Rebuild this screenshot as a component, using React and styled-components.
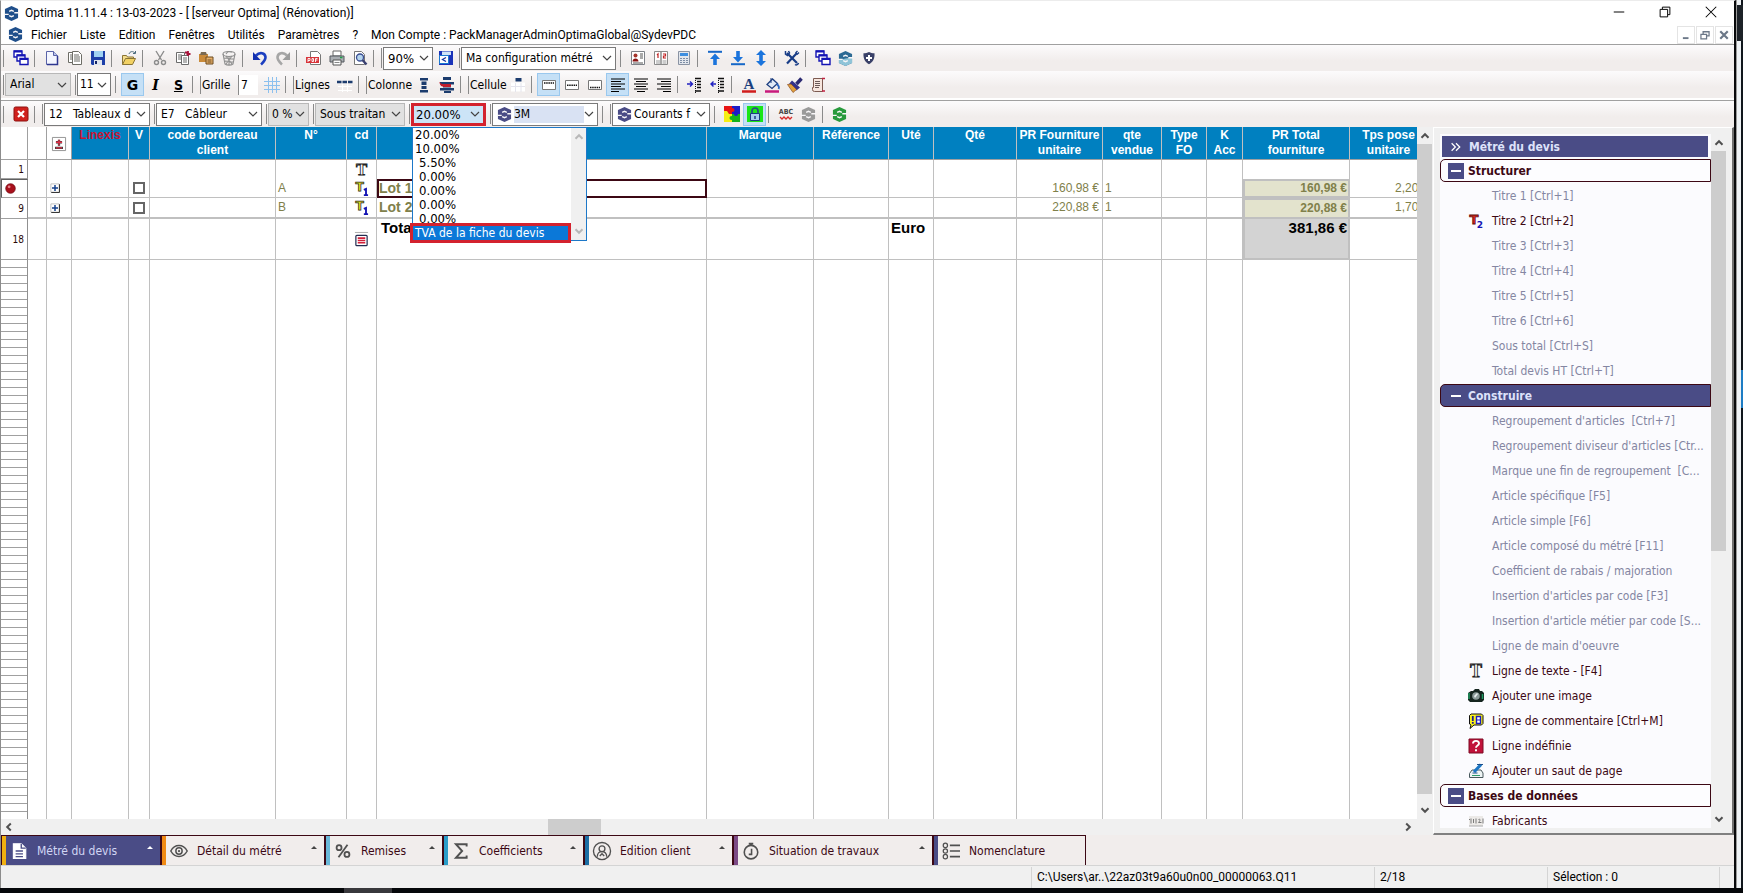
import React, { useState } from 'react';
import styled, { createGlobalStyle, css } from 'styled-components';

const ui = 'Roboto, "Noto Sans", sans-serif';
const tahoma = '"DejaVu Sans Condensed", "DejaVu Sans", sans-serif';
const arial = '"Liberation Sans", Arial, sans-serif';

const GlobalStyle = createGlobalStyle`
  * { box-sizing: border-box; }
  body {
    margin: 0;
    background: #05070a;
    font-family: ${ui};
    font-size: 12px;
    color: #000;
  }
  button, select, input { font: inherit; color: inherit; margin: 0; }
  button { padding: 0; border: 0; background: none; }
  svg { display: block; flex: none; overflow: visible; }
`

/* ---------- icons ---------- */

const Svg = ({ size = 16, children, ...rest }) => (
  <svg width={size} height={size} viewBox="0 0 16 16" fill="none" aria-hidden="true" {...rest}>{children}</svg>
)

const Logo = ({ color = '#1f4f8b', second, size = 15 }) => (
  <Svg size={size}>
    <path d="M8 0 15 3.200V12.800L8 16 1 12.800V3.200z" fill={color} />
    {second && <path d="M1 9.500 8 8l7-1v5.800L8 16 1 12.800z" fill={second} />}
    <path d="M5.500 5.700 8 4.600l2.500 1.100M5.500 10.300 8 11.400l2.500-1.100M11 7.200h5M0 8.900h5" stroke="#f8f6f8" strokeWidth="1.400" />
  </Svg>
)

const Chevron = ({ color = '#444' }) => (
  <svg width="10" height="6" viewBox="0 0 10 6" fill="none" aria-hidden="true"><path d="M1 1l4 4 4-4" stroke={color} strokeWidth="1.2" /></svg>
)

const Arrow = ({ turn = 0, color = '#505050' }) => (
  <svg width="10" height="10" viewBox="0 0 10 10" fill="none" aria-hidden="true">
    <path d="M1.5 6.8 5 3.2l3.5 3.6" stroke={color} strokeWidth="2" transform={`rotate(${turn} 5 5)`} />
  </svg>
)

const alignLines = (a, b, c) => (
  <path d={`M1 2h14M${a} 4.5h10M1 7h14M${b} 9.5h10M1 12h14M${c} 14.5h8`} stroke="#000" strokeWidth="1.2" />
)

const icons = {
  windows: <g stroke="#1414b4" strokeWidth="1.4" fill="#fff"><path d="M1 1h8v6H1z" /><path d="M4 5h8v6H4z" /><path d="M7 8.500h8v6H7z" /><path d="M1 1.500h8M4 5.500h8M7 9h8" strokeWidth="2" /></g>,
  file: <g stroke="#5a63a8"><path d="M2.500 1.500h7l4 4v9h-11z" fill="#f4f6ff" /><path d="M9.500 1.500v4h4" fill="#b9c3ea" /><path d="M13.500 6v8.500H3" stroke="#2e3790" strokeWidth="1.500" /></g>,
  files: <g stroke="#6d6d66" fill="#fff"><path d="M1.500 2.500h7v10h-7z" /><path d="M5.500 1.500h6l3 3v10h-9z" /><path d="M7 5h5M7 7h6M7 9h6M7 11h6M3 5h2M3 7h2M3 9h2" /></g>,
  save: <g><path d="M1 1h14v14H2l-1-1z" fill="#1d3fa8" /><path d="M4 1h9v6H4z" fill="#9fd2f2" /><path d="M4 10h8v5H4z" fill="#dfe5ee" /><path d="M5 11h2v3H5z" fill="#13246a" /></g>,
  open: <g stroke="#8a7434"><path d="M1.500 14.500v-9h4l1 1.500h6v2" fill="#f4dd8d" /><path d="M1.500 14.500 4.500 8.500h10l-3 6z" fill="#f2d163" /><path d="M8 4c1-3 4-3 6-1M14.500 1v2.500H12" stroke="#4a6a7c" /></g>,
  cut: <g stroke="#8c8c8c" strokeWidth="1.400"><path d="M4 1l5.500 9M12 1 6.500 10" /><circle cx="4.500" cy="12.500" r="2" /><circle cx="11.500" cy="12.500" r="2" /></g>,
  copy: <g stroke="#6b6b6b" fill="#fff"><path d="M1.500 2.500h8v10h-8z" /><path d="M6.500 5.500h7v9h-7z" /><path d="M3 5h4M3 7h3M3 9h3M8 8h4M8 10h4M8 12h4" /><path d="M10 2.500h3M13 1v5M11.500 4h4" stroke="#a8123a" strokeWidth="1.800" /></g>,
  paste: <g><path d="M1 4h9v8H1z" fill="#c98a3a" /><path d="M3 2h5l1 3H2z" fill="#7a6a52" /><path d="M8 7h7v7H8z" fill="#e7b06a" stroke="#6b4a20" /><path d="M9.500 10h4M9.500 12h4" stroke="#6b4a20" /></g>,
  trash: <g stroke="#8e8e8e" strokeWidth="1.100"><ellipse cx="8" cy="4" rx="6" ry="2.500" /><path d="M2 4l2 10c2 1.500 6 1.500 8 0l2-10M5 6l6 8M11 6l-6 8M8 6.500V15M3.500 8l9 1M4 11l8 1" /><path d="M5 4l2-2.500 4 .5" /></g>,
  undo: <g><path d="M4 5.500C8 1.500 13 3 13.500 7c.2 3-2 5-4.500 7.500" stroke="#1c3fc0" strokeWidth="2.600" /><path d="M1 2v8h7.500z" fill="#1430b0" /></g>,
  redo: <g><path d="M12 5.500C8 1.500 3 3 2.500 7c-.2 3 2 5 4.500 7.500" stroke="#a6a6a6" strokeWidth="2.600" /><path d="M15 2v8H7.500z" fill="#9c9c9c" /></g>,
  pdf: <g><path d="M4.500 1.500h7l3 3v10h-10z" fill="#fff" stroke="#777" /><path d="M0 7h13v6H0z" fill="#d8343a" /><path d="M2 12V8.500h2v2H2M6 8.500v3h1.500v-3zM9.500 12V8.500h2M9.500 10h2" stroke="#fff" strokeWidth=".9" /></g>,
  printer: <g><path d="M4 1h8v5H4z" fill="#fff" stroke="#666" /><path d="M1 6h14v6H1z" fill="#a9adb2" stroke="#55595e" /><path d="M4 10h8v5H4z" fill="#fff" stroke="#555" /><path d="M11 7.500h2.500" stroke="#1fa04a" strokeWidth="1.500" /><path d="M5.500 12.500h5" stroke="#888" /></g>,
  preview: <g><path d="M2.500 1.500h7l3 3v10h-10z" fill="#fff" stroke="#777" /><circle cx="8" cy="7.500" r="3.500" fill="#b6d5ee" stroke="#3a4e92" strokeWidth="1.300" /><path d="M10.500 10l4 4.500" stroke="#3a3f70" strokeWidth="2.400" /></g>,
  saveConf: <g><path d="M1 1h14v14H1z" fill="#1b33b8" /><path d="M4 1.500h9V5H4z" fill="#cfe4f7" /><path d="M1.500 5.500h9v8h-9z" fill="#fff" stroke="#1b7ad0" /><path d="M8 7.500 4.500 9.500l3.500 2" stroke="#1233a0" strokeWidth="1.300" /></g>,
  contact: <g><path d="M1.500 1.500h13v13h-13z" fill="#fff" stroke="#7e8288" /><circle cx="5.500" cy="5.500" r="2" fill="#a5352c" /><path d="M2.500 11.500c0-4 6-4 6 0z" fill="#8a1414" /><path d="M10 4h3M10 6h3M10 8h3M3 13h10" stroke="#555" /></g>,
  pages: <g><path d="M1.500 1.500h6.500v13H1.500zM8 1.500h6.500v13H8z" fill="#fff" stroke="#8b8b8b" /><path d="M4 5l1-1v4M10 4h2.500v2H10.500v2h2.500" stroke="#c22424" strokeWidth="1.200" /><path d="M3 11h4M3 13h4M9.500 11h4M9.500 13h4" stroke="#999" /></g>,
  calc: <g><path d="M2.500 1.500h11v13h-11z" fill="#e2e6ec" stroke="#8a93a3" /><path d="M4 3h8v3H4z" fill="#3d8ee0" /><path d="M4 8.500h8M4 10.500h8M4 12.500h8" stroke="#7e8da5" strokeDasharray="2 1" /></g>,
  toTop: <g><path d="M1 1.800h14" stroke="#1667c8" strokeWidth="2" /><path d="M8 3.500 13 9H9.800v6H6.200V9H3z" fill="#1b74dc" /></g>,
  toBottom: <g><path d="M1 14.200h14" stroke="#1667c8" strokeWidth="2" /><path d="M8 12.500 13 7H9.800V1H6.200v6H3z" fill="#1b74dc" /></g>,
  upDown: <path d="M8 0l5 5H9.800v6H13l-5 5-5-5h3.200V5H3z" fill="#1b74dc" />,
  tools: <g stroke="#183c86"><path d="M3 3l10 10" strokeWidth="2.200" /><path d="M13 3 3 13.500" strokeWidth="2.200" /><path d="M1.500 1v3l2 1.500L5.500 3 4.500 1M11 14.500c1.500 1 3 0 3.500-1.500" strokeWidth="1.500" /><path d="M11.500 3l2-2M13 4.500l2-2" strokeWidth="1.300" /></g>,
  shield: <g><path d="M8 2C9.500 3 11.500 3.300 13.500 3.300 14 9 11.500 12.500 8 14.300 4.500 12.500 2 9 2.500 3.300 4.500 3.300 6.500 3 8 2z" fill="#3a4168" /><path d="M8 5v6M5 8h6" stroke="#fff" strokeWidth="2" /></g>,
  grid: <path d="M0 4.500h16M0 8.500h16M0 12.500h16M4.500 0v16M8.500 0v16M12.500 0v16" stroke="#8cc0ee" />,
  lines: <g><path d="M0 5h16" stroke="#1c3c6e" strokeWidth="2.500" strokeDasharray="4.500 1" /><path d="M1 9.500h14M1 13.500h14M5.500 7v8M10.500 7v8" stroke="#fff" /></g>,
  cols: <g fill="#1c3c6e"><path d="M4 1h8v2.500H4zM5.500 4.500h5V8h-5zM5.500 9h5v3h-5zM4 13h8v2.500H4z" /></g>,
  colsDel: <g><path d="M4 0h8v3H4zM1 5h14v2.500H1zM4 8.500h8v2H4zM1 11h14v2.500H1zM5 14h7v2H5z" fill="#1c3c6e" /><path d="M0 5l3 2h9v3H5L2 9z" fill="#c01c2c" /></g>,
  cell: <g><path d="M1 5.500h14v9H1z" fill="#fff" /><path d="M5.500 1h6v3.500h-6z" fill="#1c3c6e" /><path d="M1 9.500h14M5.500 6v9M11 6v9" stroke="#e4e4ec" /></g>,
  vTop: <g><path d="M1.500 3.500h13v9h-13z" fill="#fff" stroke="#777" /><path d="M3 6h10" stroke="#111" strokeWidth="1.500" strokeDasharray="1.500 .7" /></g>,
  vMid: <g><path d="M1.500 3.500h13v9h-13z" fill="#fff" stroke="#777" /><path d="M3 8.200h10" stroke="#111" strokeWidth="1.500" strokeDasharray="1.500 .7" /></g>,
  vBot: <g><path d="M1.500 3.500h13v9h-13z" fill="#fff" stroke="#777" /><path d="M3 10.500h10" stroke="#111" strokeWidth="1.500" strokeDasharray="1.500 .7" /></g>,
  left: alignLines(1, 1, 1),
  center: alignLines(3, 3, 4),
  right: alignLines(5, 5, 7),
  indent: <g><path d="M8 1.500h6M10 4.500h4M10 7.500h4M10 10.500h4M8 14h6" stroke="#111" strokeWidth="1.500" /><path d="M8.500 1v15" stroke="#111" strokeDasharray="1 1" /><path d="M0 7h5M3 4.500 5.500 7 3 9.500" stroke="#2020c0" strokeWidth="1.400" /></g>,
  outdent: <g><path d="M8 1.500h6M10 4.500h4M10 7.500h4M10 10.500h4M8 14h6" stroke="#111" strokeWidth="1.500" /><path d="M8.500 1v15" stroke="#111" strokeDasharray="1 1" /><path d="M1 7h5M3.500 4.500 1 7l2.500 2.500" stroke="#2020c0" strokeWidth="1.400" /></g>,
  fontColor: <g><text x="8" y="12" textAnchor="middle" fontFamily="Liberation Serif" fontWeight="700" fontSize="15" fill="#1b3f7e">A</text><path d="M1 14.500h14" stroke="#d01c1c" strokeWidth="2.500" /></g>,
  fill: <g><path d="M3 7.500 8.500 2l5 4.500-5.500 5z" fill="#dfe9f6" stroke="#1e3f80" strokeWidth="1.300" /><path d="M7 1v5" stroke="#1e3f80" /><path d="M13 7c2 2 2.500 3.500 1.500 5" stroke="#2a66c0" strokeWidth="1.800" /><path d="M1 14.500h14" stroke="#c81a7c" strokeWidth="2.500" /></g>,
  brush: <g><path d="M14.500 1.500 9.500 7" stroke="#2c2a72" strokeWidth="3.500" /><path d="M5 3.500 13 10.500 9.500 13.500 2 7z" fill="#34318a" /><path d="M.5 7.500 4 7l5.500 5.500L6 15.500z" fill="#e3a23c" stroke="#8a4a20" strokeWidth=".7" /></g>,
  script: <g><path d="M3.500 1.500h9v13h-8a2 2 0 0 1-2-2v-2h1z" fill="#f7e6de" stroke="#7c5a50" /><path d="M5 4.500h5M5 6.500h5M5 8.500h5M5 10.500h4" stroke="#6a5a58" /><path d="M12 1.500h3M12 14h3" stroke="#c02040" strokeWidth="1.500" /></g>,
  close: <g><rect x="1" y="1" width="14" height="14" rx="1.500" fill="#d0201c" stroke="#8c100e" /><path d="M5 5l6 6M11 5l-6 6" stroke="#fff" strokeWidth="2.200" /></g>,
  puzzle: <g><path d="M0 0h8v8H0z" fill="#e81414" /><path d="M8 0h8v8H8z" fill="#1c1cc8" /><path d="M0 8h8v8H0z" fill="#f6ee12" /><path d="M8 8h8v8H8z" fill="#16b41c" /><path d="M0 5h3l2 3h3v3H0z" fill="#f6ee12" /><circle cx="8.500" cy="4" r="2" fill="#e81414" /><circle cx="12" cy="8" r="2" fill="#1c1cc8" /><circle cx="7.500" cy="12" r="2" fill="#16b41c" /></g>,
  lock: <g><path d="M0 0h16v16H0z" fill="#19e619" /><path d="M5 8V5a3 3 0 0 1 6 0v3" stroke="#2b4a86" strokeWidth="1.700" /><path d="M3.500 7.500h9v7h-9z" fill="#a9cdee" stroke="#1d3d80" /><path d="M8 10v3" stroke="#1d3d80" strokeWidth="1.500" /></g>,
  spell: <g><text x="8" y="8" textAnchor="middle" fontFamily="DejaVu Sans Condensed" fontWeight="700" fontSize="7" fill="#444">ABC</text><path d="M2 11l2 2 2-2 2 2 2-2 2 2 2-2" stroke="#d82a2a" strokeWidth="1.300" /></g>,
  lineText: <text x="8" y="14" textAnchor="middle" fontFamily="Liberation Serif" fontWeight="700" fontSize="18" fill="#fff" stroke="#222" strokeWidth=".9">T</text>,
  title1: <g><text x="6" y="11" textAnchor="middle" fontFamily="DejaVu Sans" fontWeight="700" fontSize="13" fill="#f3ec1c" stroke="#222" strokeWidth=".8">T</text><path d="M10.500 9.500 12.800 8.500v6M10.500 15h4.500" stroke="#1414b4" strokeWidth="2" /></g>,
  title2: <g><text x="6" y="11" textAnchor="middle" fontFamily="DejaVu Sans" fontWeight="700" fontSize="13" fill="#e02a1c" stroke="#5a0c08" strokeWidth=".8">T</text><text x="12" y="15" textAnchor="middle" fontFamily="DejaVu Sans" fontWeight="700" fontSize="9" fill="#1414b4">2</text></g>,
  total: <g><rect x="2" y="3.500" width="12" height="11" rx="1" fill="#fff" stroke="#222c50" strokeWidth="1.300" /><path d="M4 6.500h8M4 9h8M4 11.500h8" stroke="#d2203a" strokeWidth="1.700" /><path d="M1 .5h14" stroke="#aaa" /></g>,
  camera: <g><path d="M0 5l3-2h2l2-2h4l1 2h2l2 2v7l-2 2H2l-2-2z" fill="#15251f" /><circle cx="8" cy="8" r="3.800" fill="#8a9a98" /><path d="M6 8l3-3 1 1-3 4z" fill="#e6eeee" /><path d="M1 5v6M14.500 6v5" stroke="#1f9a62" strokeWidth="1.500" /></g>,
  comment: <g><path d="M1.500 2.500 3 1h10.500L15 2.500v8L13.500 12H6l-4 3.500L3 12l-1.500-1z" fill="#f8f01c" stroke="#111" /><path d="M4.800 3v5M4.800 9v1.800" stroke="#1a1a90" strokeWidth="1.800" /><path d="M8.500 3.500 12.500 3.500v7h-4z" fill="#fff" stroke="#1a1ac0" strokeWidth="1.400" /><path d="M8.500 7h4" stroke="#1a1ac0" /></g>,
  unknown: <g><path d="M1 1h14v14H1z" fill="#c1123a" stroke="#7c0a24" /><path d="M5 5.500c0-3.500 6-3.500 6 0 0 2-3 2-3 4.200M8 11.200v2" stroke="#fff" strokeWidth="1.900" /></g>,
  pageBreak: <g><path d="M1.500 10.500 4 7h9l2 3v4.500H1.500z" fill="#eef4f4" stroke="#48585c" /><path d="M13 1.500 6 9" stroke="#1b76c4" strokeWidth="3.200" /><path d="M9 1.500h6M4.500 10h5" stroke="#1d4f8c" /><path d="M4 12.500h8" stroke="#2f9c6c" /></g>,
  makers: <g><path d="M1 3h14v10H1z" fill="#eceae8" /><path d="M3 5.500v5M5.500 6v4M8 5.500v5M10.500 6.500c2-1 2 1 0 3h3M1 7l1-1M15 5.500v5" stroke="#7a7a7a" /><path d="M1 13h14" stroke="#aaa" /></g>,
  plus: <g><path d="M2.500 2.500h11v11h-11z" fill="#fff" stroke="#b0b0b0" /><path d="M14 3v11H3" stroke="#333" strokeWidth="1.300" /><path d="M8 4v8M4 8h8" stroke="#16418c" strokeWidth="2" /></g>,
  plusMinus: <g><path d="M.5.500h15v15H.5z" fill="#fff" stroke="#888" /><path d="M8 3v7M4.500 6h7M3.500 12.500h9" stroke="#333" strokeWidth="2.600" /><path d="M8 3v6.500M4.500 6h7M4.500 12.500h7" stroke="#e03048" strokeWidth="1.500" /></g>,
  ball: <g><circle cx="8" cy="8" r="7" fill="#a8101c" stroke="#6c0810" /><circle cx="6" cy="5.500" r="2" fill="#e8828a" /></g>,
}

const Icon = ({ name, size }) => <Svg size={size}>{icons[name]}</Svg>

/* ---------- window frame ---------- */

const Desktop = styled.div`
  display: flex;
  flex-direction: column;
  height: 100vh;
  min-height: 600px;
  overflow: hidden;
`
const DesktopRow = styled.div`
  display: flex;
  flex: 1;
  min-height: 0;
`
const Window = styled.div`
  display: flex;
  flex-direction: column;
  flex: 1;
  min-width: 0;
  background: #f0f0f0;
  border-left: 1px solid #8c8c8c;
  border-right: 2px solid #08090b;
  border-top: 1px solid #ececec;
`
const Behind = styled.div`
  display: flex;
  flex-direction: column;
  flex: none;
  width: 7px;
  background: #eef2f5;
  border-left: 1px solid #9a9a9a;
  border-right: 2px solid #10161c;
`
const BehindBar = styled.div`
  height: 36px;
  margin: 5px -2px 0 0;
  background: #1d2228;
`
const BehindMark = styled.div`
  width: 2px;
  height: 38px;
  margin: 329px -2px 0 auto;
  background: #1d7cc4;
`
const Taskbar = styled.div`
  flex: none;
  height: 5px;
  padding-left: 344px;
  background: #05070a;
  &::before {
    content: '';
    display: block;
    width: 48px;
    height: 5px;
    background: #38383c;
  }
`
const TitleBar = styled.header`
  display: flex;
  align-items: center;
  gap: 6px;
  height: 24px;
  padding-left: 3px;
  background: #fff;
`
const Title = styled.h1`
  flex: 1;
  margin: 0;
  font-size: 12px;
  font-weight: 400;
`
const WindowButtons = styled.div`
  display: flex;
  align-self: flex-start;
`
const WindowButton = styled.button`
  display: flex;
  align-items: center;
  justify-content: center;
  width: 46px;
  height: 21px;
`
const MenuBar = styled.nav`
  display: flex;
  align-items: center;
  gap: 13px;
  height: 20px;
  padding-left: 7px;
  background: #fff;
  border-bottom: 1px solid #a0a0a0;
  > svg { margin-right: -5px; }
`
const MdiButtons = styled.div`
  display: flex;
  gap: 1px;
  margin-left: auto;
  padding-right: 1px;
`
const MdiButton = styled.button`
  display: flex;
  align-items: center;
  justify-content: center;
  width: 18px;
  height: 18px;
  border: 1px solid #e4e4e4;
`

/* ---------- tool bars ---------- */

const ToolBar = styled.div`
  display: flex;
  align-items: center;
  flex: none;
  height: ${({ tall }) => tall ? 27 : 26}px;
  background: linear-gradient(#fcfbfc, #f1edec 60%);
  font-family: ${tahoma};
  ${({ ruled }) => ruled && css`
    height: 27px;
    border-top: 1px solid #a0a0a0;
    box-shadow: 0 -2px 0 #fff;
    margin-top: 2px;
  `}
`
const Sep = styled.span`
  flex: none;
  width: 8px;
  height: 17px;
  padding-left: 2px;
  &::before {
    content: '';
    display: block;
    width: 1px;
    height: 100%;
    background: #8a8a8a;
  }
`
const Grip = styled(Sep)`
  width: 4px;
  height: 20px;
`
const ToolButton = styled.button`
  display: flex;
  align-items: center;
  justify-content: center;
  flex: none;
  width: 23px;
  height: 23px;
  ${({ active }) => active && css`
    background: #c5e0f6;
    border: 1px solid #9ac8ee;
  `}
`
const Letter = styled.span`
  font: ${({ face }) => face};
  text-decoration: ${({ underline }) => underline ? 'underline' : 'none'};
`
const SelectBox = styled.span`
  display: flex;
  align-items: center;
  gap: 2px;
  flex: none;
  position: relative;
  width: ${({ w }) => w}px;
  height: 23px;
  margin-right: ${({ gap = 2 }) => gap}px;
  padding-left: ${({ pad = 4 }) => pad}px;
  border: 1px solid ${({ grey }) => grey ? '#b8b8b8' : '#7a7a7a'};
  background: ${({ grey }) => grey ? '#e1e1e1' : '#fff'};
  ${({ marked }) => marked && css`
    padding-left: 2px;
    border: 3px solid #d3222e;
    background: #cce4f7;
  `}
  > svg:last-of-type { position: absolute; right: 3px; pointer-events: none; }
`
const NativeSelect = styled.select`
  appearance: none;
  flex: 1;
  min-width: 0;
  height: 17px;
  margin-right: 13px;
  padding: 0;
  border: 0;
  outline: 0;
  font-size: ${({ $large }) => $large ? 13 : 12}px;
  line-height: 17px;
  background: ${({ $tint }) => $tint ? '#d9e2f3' : 'transparent'};
`
const FieldLabel = styled.label`
  width: ${({ w }) => w}px;
  flex: none;
  margin-left: 2px;
  padding-left: 1px;
  border-left: 1px solid #8a8a8a;
  font-size: 12px;
  line-height: 18px;
  white-space: nowrap;
`
const SmallInput = styled.input`
  width: 20px;
  height: 20px;
  margin-right: 2px;
  padding: 0 2px;
  border: 0;
  border-left: 1px solid #8a8a8a;
  background: #fff;
`
const DropList = styled.ul`
  position: absolute;
  z-index: 5;
  top: 21px;
  left: -2px;
  display: flex;
  width: 175px;
  margin: 0;
  padding: 0;
  border: 1px solid #1d78c8;
  background: #fff;
  font-size: 13px;
  list-style: none;
`
const Options = styled.div`
  flex: 1;
`
const Option = styled.li`
  height: 14px;
  padding-left: ${({ inset }) => inset ? 6 : 2}px;
  line-height: 14px;
  white-space: nowrap;
  ${({ selected }) => selected && css`
    position: relative;
    margin-right: 3px;
    color: #fff;
    background: #0b78d8;
    outline: 3px solid #d3222e;
    font-size: 12px;
  `}
`

/* ---------- scroll bars ---------- */

const Scroll = styled.div`
  display: flex;
  flex: none;
  flex-direction: ${({ row }) => row ? 'row' : 'column'};
  align-items: center;
  justify-content: space-between;
  ${({ row }) => row ? 'height: 16px; padding: 0 20px 0 3px;' : 'width: 15px; padding: 4px 0;'}
  background: #f0f0f0;
`
const Track = styled.div`
  display: flex;
  flex: 1;
  align-self: stretch;
  flex-direction: ${({ row }) => row ? 'row' : 'column'};
  margin: ${({ row }) => row ? '0 4px' : '3px 0'};
`
const Thumb = styled.div`
  flex: ${({ size }) => size};
  background: #cdcdcd;
`
const Space = styled.div`
  flex: ${({ size }) => size};
`

/* ---------- grid ---------- */

const Workspace = styled.main`
  display: flex;
  flex: 1;
  min-height: 0;
`
const GridSide = styled.section`
  display: flex;
  flex-direction: column;
  flex: 1;
  min-width: 0;
`
const GridRow = styled.div`
  display: flex;
  flex: 1;
  min-height: 0;
  padding-right: 1px;
`
const GridClip = styled.div`
  flex: 1;
  min-width: 0;
  overflow: hidden;
  background: #fff;
`
const Grid = styled.table`
  width: 1427px;
  height: 100%;
  table-layout: fixed;
  border-collapse: separate;
  border-spacing: 0;
  font: 12px ${arial};
`
const Th = styled.th`
  height: 33px;
  padding: 1px 0 0;
  border-right: 1px solid #c0c0c0;
  border-bottom: 1px solid #a0a0a0;
  background: ${({ plain }) => plain ? '#fff' : '#0080c0'};
  color: ${({ red }) => red ? '#c81432' : '#fff'};
  line-height: 15px;
  white-space: pre-line;
  vertical-align: ${({ plain }) => plain ? 'middle' : 'top'};
  > svg { margin: 0 auto; }
  ${({ plain }) => plain && 'border-color: #a0a0a0;'}
`
const Tr = styled.tr`
  height: ${({ h }) => h}px;
  color: ${({ dark }) => dark ? '#000' : '#80804a'};
`
const Td = styled.td`
  padding: ${({ top }) => top ? 1 : 0}px 3px 0 ${({ pad = 2 }) => pad}px;
  overflow: hidden;
  border-right: 1px solid #c0c0c0;
  border-bottom: ${({ line }) => line}px solid #c0c0c0;
  line-height: 15px;
  white-space: nowrap;
  text-align: ${({ align = 'left' }) => align};
  font-weight: ${({ bold }) => bold ? 700 : 400};
  font-size: ${({ big, top }) => top ? 15 : big ? 14 : 12}px;
  vertical-align: ${({ top }) => top ? 'top' : 'middle'};
  > svg, > input { margin: 0 auto; }
  ${({ focus }) => focus && css`
    border: 2px solid #3c0814;
    padding-left: 0;
  `}
  ${({ shade, top }) => shade && css`
    background: ${shade};
    border: 2px solid #c0c0c0;
    padding-right: 1px;
    ${top && 'border-top: 0;'}
  `}
`
const Expand = styled.button`
  display: block;
`
const Check = styled.input`
  display: block;
  appearance: none;
  width: 12px;
  height: 12px;
  border: 2px solid #666;
  background: #fff;
`
const RowHead = styled.th`
  padding: 0 3px 0 0;
  border-right: 1px solid #909090;
  border-bottom: 1px solid #a0a0a0;
  color: #2a0808;
  font: 10px ${tahoma};
  text-align: right;
  ${({ current }) => current && css`
    padding-left: 3px;
    border-top: 1px solid #606060;
    border-left: 1px solid #606060;
  `}
`
const Stripes = styled.td`
  padding: 0;
  border-right: 1px solid #909090;
  background: repeating-linear-gradient(#fff 0 7px, #a0a0a0 7px 8px);
`

/* ---------- side panel ---------- */

const Panel = styled.aside`
  display: flex;
  flex: none;
  width: 301px;
  padding: 6px 6px 5px;
  border: 1px solid #fff;
  border-right: 2px solid #707070;
  border-bottom: 2px solid #808080;
`
const PanelList = styled.div`
  flex: 1;
  min-width: 0;
  overflow: hidden;
  background: #fbfbfe;
  font-family: ${tahoma};
`
const PanelTitle = styled.h2`
  display: flex;
  align-items: center;
  gap: 8px;
  height: 21px;
  margin: 2px 3px 2px 2px;
  padding-left: 9px;
  background: #4a4c86;
  color: #dde2fa;
  font-size: 12px;
`
const Group = styled.button`
  display: flex;
  align-items: center;
  gap: 4px;
  width: 100%;
  height: 23px;
  margin: 1px 0;
  padding-left: 7px;
  border: 1px solid #3c0814;
  border-radius: 5px 0 0 5px;
  background: ${({ open }) => open ? '#4a4c86' : '#fdfdff'};
  color: ${({ open }) => open ? '#dde2fa' : '#3c0814'};
  font-weight: 700;
`
const Minus = styled.span`
  display: flex;
  align-items: center;
  justify-content: center;
  width: 16px;
  height: 16px;
  background: #4a4c86;
  &::before {
    content: '';
    width: 10px;
    height: 2px;
    background: #fff;
  }
`
const Action = styled.button`
  display: flex;
  align-items: center;
  gap: 8px;
  width: 100%;
  height: 25px;
  padding-left: 28px;
  color: ${({ enabled }) => enabled ? '#3c0814' : '#8486a2'};
  white-space: pre;
  &::before {
    content: '';
    display: ${({ enabled }) => enabled ? 'none' : 'block'};
    width: 16px;
  }
`

/* ---------- bottom ---------- */

const Tabs = styled.div`
  display: flex;
  flex: none;
  height: 31px;
  border-bottom: 1px solid #d4d4d4;
  background: #f1edec;
  font-family: ${tahoma};
`
const Tab = styled.button`
  display: flex;
  align-items: center;
  width: ${({ w }) => w}px;
  padding-left: 5px;
  border-top: 1px solid #3c0814;
  border-left: 2px solid #3c0814;
  box-shadow: inset 4px 0 0 ${({ stripe }) => stripe};
  background: ${({ active }) => active ? '#4a4c86' : 'transparent'};
  color: ${({ active }) => active ? '#d2d6f4' : '#3c0814'};
  &:first-child { border-left-width: 1px; }
  &:last-child { border-right: 1px solid #3c0814; }
`
const TabIcon = styled.span`
  display: flex;
  justify-content: center;
  width: 20px;
  margin: 0 8px 0 2px;
  color: ${({ active }) => active ? '#fff' : '#505050'};
`
const TabCaret = styled.span`
  margin: 0 7px 7px auto;
  border: 3px solid transparent;
  border-top: 0;
  border-bottom-color: ${({ active }) => active ? '#fff' : '#444'};
`
const StatusBar = styled.footer`
  display: flex;
  flex: none;
  height: 22px;
  padding: 1px 14px 0 0;
  line-height: 20px;
`
const StatusCell = styled.span`
  flex: none;
  width: ${({ w }) => w}px;
  padding-left: 5px;
  border-left: 1px solid #d4d4d4;
  &:first-of-type { margin-left: auto; }
  &:last-of-type { border-right: 1px solid #d4d4d4; }
`

const menus = ['Fichier', 'Liste', 'Edition', 'Fenêtres', 'Utilités', 'Paramètres', '?', 'Mon Compte : PackManagerAdminOptimaGlobal@SydevPDC']

const rates = ['20.00%', '10.00%', '5.50%', '0.00%', '0.00%', '0.00%', '0.00%', 'TVA de la fiche du devis']

const columns = [
  { w: 27, plain: true }, { w: 19, plain: true }, { w: 25, plain: true, icon: 'plusMinus' },
  { w: 57, name: 'Linexis', red: true }, { w: 21, name: 'V' }, { w: 126, name: 'code bordereau\nclient' },
  { w: 71, name: 'N°' }, { w: 30, name: 'cd' }, { w: 330, name: '' }, { w: 107, name: 'Marque' },
  { w: 75, name: 'Référence' }, { w: 45, name: 'Uté' }, { w: 83, name: 'Qté' },
  { w: 86, name: 'PR Fourniture\nunitaire' }, { w: 59, name: 'qte\nvendue' }, { w: 45, name: 'Type\nFO' },
  { w: 36, name: 'K\nAcc' }, { w: 107, name: 'PR Total\nfourniture' }, { w: 78, name: 'Tps pose\nunitaire' },
]

const lots = [
  { code: 'A', name: 'Lot 1', unit: '160,98 €', total: '160,98 €', time: '2,20', current: true },
  { code: 'B', name: 'Lot 2', unit: '220,88 €', total: '220,88 €', time: '1,70', row: 9 },
]

const groups = [
  {
    name: 'Structurer',
    items: [
      ['Titre 1 [Ctrl+1]'], ['Titre 2 [Ctrl+2]', 'title2'], ['Titre 3 [Ctrl+3]'], ['Titre 4 [Ctrl+4]'],
      ['Titre 5 [Ctrl+5]'], ['Titre 6 [Ctrl+6]'], ['Sous total [Ctrl+S]'], ['Total devis HT [Ctrl+T]'],
    ],
  },
  {
    name: 'Construire',
    open: true,
    items: [
      ["Regroupement d'articles  [Ctrl+7]"], ["Regroupement diviseur d'articles [Ctr..."],
      ['Marque une fin de regroupement  [C...'], ['Article spécifique [F5]'], ['Article simple [F6]'],
      ['Article composé du métré [F11]'], ['Coefficient de rabais / majoration'],
      ["Insertion d'articles par code [F3]"], ["Insertion d'article métier par code [S..."],
      ["Ligne de main d'oeuvre"], ['Ligne de texte - [F4]', 'lineText'], ['Ajouter une image', 'camera'],
      ['Ligne de commentaire [Ctrl+M]', 'comment'], ['Ligne indéfinie', 'unknown'],
      ['Ajouter un saut de page', 'pageBreak'],
    ],
  },
  { name: 'Bases de données', items: [['Fabricants', 'makers']] },
]

const tabs = [
  { name: 'Métré du devis', w: 159, stripe: '#f0b010', icon: <><path d="M3 1.500h7l4 4v9H3z" fill="#fff" stroke="#fff" /><path d="M10 1.500v4h4M5 8h6.500M5 10.500h6.500M5 13h6.500" stroke="#4a4c86" strokeWidth="1.200" /></> },
  { name: 'Détail du métré', w: 164, stripe: '#f08a14', icon: <><path d="M.7 8c3.500-6.500 11-6.500 14.600 0-3.600 6.500-11 6.500-14.600 0z" stroke="currentColor" strokeWidth="1.300" /><circle cx="8" cy="8" r="2.800" stroke="currentColor" strokeWidth="1.300" /><circle cx="8" cy="8" r="1" fill="currentColor" /></> },
  { name: 'Remises', w: 118, stripe: '#6ab8d8', icon: <><circle cx="4.500" cy="5" r="2.200" stroke="currentColor" strokeWidth="1.600" /><circle cx="11.500" cy="11" r="2.200" stroke="currentColor" strokeWidth="1.600" /><path d="M12 2.500 4 13.500" stroke="currentColor" strokeWidth="1.600" /></> },
  { name: 'Coefficients', w: 141, stripe: '#2a9cc8', icon: <path d="M13 4V2H3.500L9 8l-5.500 6H13v-2" stroke="currentColor" strokeWidth="1.700" /> },
  { name: 'Edition client', w: 149, stripe: '#1c6ea4', icon: <><circle cx="8" cy="8" r="7.600" stroke="currentColor" strokeWidth="1.200" /><circle cx="8" cy="6" r="2.600" stroke="currentColor" strokeWidth="1.200" /><path d="M3.800 13c0-6 8.400-6 8.400 0M6 12.500l2-2 2 2" stroke="currentColor" strokeWidth="1.200" /></> },
  { name: 'Situation de travaux', w: 200, stripe: '#7c4a86', icon: <><circle cx="8" cy="9" r="6" stroke="currentColor" strokeWidth="1.400" /><path d="M6 1.500h4M8 1.500v2" stroke="currentColor" strokeWidth="1.800" /><path d="M8.500 6v5H6" stroke="currentColor" strokeWidth="1.400" /></> },
  { name: 'Nomenclature', w: 154, stripe: '#4a4c86', last: true, icon: <><circle cx="3" cy="3" r="1.900" stroke="currentColor" strokeWidth="1.100" /><circle cx="3" cy="8" r="1.900" stroke="currentColor" strokeWidth="1.100" /><circle cx="3" cy="13" r="1.900" stroke="currentColor" strokeWidth="1.100" /><path d="M7 3h9M7 8h9M7 13h9" stroke="currentColor" strokeWidth="1.400" /></> },
]

const Tools = ({ names, active = [] }) => names.map(name => (
  <ToolButton key={name} aria-label={name} active={active.includes(name) ? 1 : undefined}><Icon name={name} /></ToolButton>
))

const Combo = ({ label, value, icon, tint, large, children, ...rest }) => (
  <SelectBox {...rest}>
    {icon && <Logo color="#4a4c86" />}
    <NativeSelect aria-label={label} $tint={tint} $large={large}><option>{value}</option></NativeSelect>
    <Chevron />
    {children}
  </SelectBox>
)

const ScrollBar = ({ row, parts }) => (
  <Scroll row={row}>
    <Arrow turn={row ? -90 : 0} />
    <Track row={row}><Space size={parts[0]} /><Thumb size={parts[1]} /><Space size={parts[2]} /></Track>
    <Arrow turn={row ? 90 : 180} />
  </Scroll>
)

const LotRow = ({ lot }) => {
  const line = lot.current ? 1 : 2;
  return (
    <Tr h={lot.current ? 19 : 21}>
      <RowHead current={lot.current}>{lot.current ? <Icon name="ball" size={11} /> : lot.row}</RowHead>
      <Td line={line} />
      <Td line={line}><Expand aria-label={`Ouvrir ${lot.name}`}><Icon name="plus" size={12} /></Expand></Td>
      <Td line={line} />
      <Td line={line}><Check type="checkbox" aria-label={`V ${lot.name}`} /></Td>
      <Td line={line} />
      <Td line={line}>{lot.code}</Td>
      <Td line={line}><Icon name="title1" size={15} /></Td>
      <Td line={line} bold big focus={lot.current}>{lot.name}</Td>
      <Td line={line} /><Td line={line} /><Td line={line} /><Td line={line} />
      <Td line={line} align="right">{lot.unit}</Td>
      <Td line={line}>1</Td>
      <Td line={line} /><Td line={line} />
      <Td line={line} bold align="right" shade="#e3e3cd">{lot.total}</Td>
      <Td line={line} pad={45}>{lot.time}</Td>
    </Tr>
  )
}

const App = () => {
  const [ tab, setTab ] = useState(0);

  return (
    <Desktop>
      <GlobalStyle />
      <DesktopRow>
        <Window>
          <TitleBar>
            <Logo />
            <Title>Optima 11.11.4 : 13-03-2023 - [ [serveur Optima] (Rénovation)]</Title>
            <WindowButtons>
              <WindowButton aria-label="Réduire"><Svg size={12}><path d="M1 8h14" stroke="#000" strokeWidth="1.300" /></Svg></WindowButton>
              <WindowButton aria-label="Restaurer"><Svg size={12}><path d="M1.500 4.500h10v10h-10zM4.500 4V1.500h10v10H12" stroke="#000" strokeWidth="1.300" /></Svg></WindowButton>
              <WindowButton aria-label="Fermer"><Svg size={12}><path d="M1 1l14 14M15 1 1 15" stroke="#000" strokeWidth="1.400" /></Svg></WindowButton>
            </WindowButtons>
          </TitleBar>
          <MenuBar>
            <Logo />
            {menus.map(menu => <button key={menu}>{menu}</button>)}
            <MdiButtons>
              <MdiButton aria-label="Réduire le document"><Svg size={10}><path d="M3 13h9" stroke="#6c7888" strokeWidth="3" /></Svg></MdiButton>
              <MdiButton aria-label="Restaurer le document"><Svg size={10}><path d="M1.500 7h9v7h-9zM5 6V2.500h9.500v7H11M5 3h9" stroke="#6c7888" strokeWidth="2" /></Svg></MdiButton>
              <MdiButton aria-label="Fermer le document"><Svg size={10}><path d="M2 2l12 12M14 2 2 14" stroke="#6c7888" strokeWidth="3.500" /></Svg></MdiButton>
            </MdiButtons>
          </MenuBar>

          <ToolBar>
            <Sep /><Tools names={['windows']} />
            <Sep /><Tools names={['file', 'files', 'save']} />
            <Sep /><Tools names={['open']} />
            <Sep /><Tools names={['cut', 'copy', 'paste', 'trash']} />
            <Sep /><Tools names={['undo', 'redo']} />
            <Sep /><Tools names={['pdf', 'printer', 'preview']} />
            <Sep /><Grip />
            <Combo label="Zoom" value="90%" large w={50} gap={1} />
            <Tools names={['saveConf']} /><Grip />
            <Combo label="Configuration" value="Ma configuration métré" w={155} />
            <Sep /><Tools names={['contact', 'pages', 'calc']} />
            <Sep /><Tools names={['toTop', 'toBottom', 'upDown']} />
            <Sep /><Tools names={['tools']} />
            <Sep /><Tools names={['windows']} />
            <ToolButton aria-label="Optima"><Logo color="#2d6a94" second="#8fc4d8" /></ToolButton>
            <Tools names={['shield']} />
          </ToolBar>

          <ToolBar tall>
            <Grip />
            <Combo label="Police" value="Arial" w={66} grey />
            <Grip />
            <Combo label="Taille" value="11" w={34} gap={2} pad={2} />
            <Sep />
            <ToolButton active={1}><Letter face='900 14px "DejaVu Sans", sans-serif'>G</Letter></ToolButton>
            <ToolButton><Letter face='italic 700 14px "DejaVu Serif", serif'>I</Letter></ToolButton>
            <ToolButton><Letter underline face='700 14px "DejaVu Sans Condensed", sans-serif'>S</Letter></ToolButton>
            <Sep />
            <FieldLabel htmlFor="grille" w={38}>Grille</FieldLabel>
            <SmallInput id="grille" defaultValue="7" />
            <Tools names={['grid']} />
            <Sep />
            <FieldLabel as="span" w={40}>Lignes</FieldLabel>
            <Tools names={['lines']} />
            <Sep />
            <FieldLabel as="span" w={46}>Colonne</FieldLabel>
            <Tools names={['cols', 'colsDel']} />
            <Sep />
            <FieldLabel as="span" w={38}>Cellule</FieldLabel>
            <Tools names={['cell']} />
            <Sep />
            <Tools names={['vTop', 'vMid', 'vBot', 'left', 'center', 'right']} active={['vTop', 'left']} />
            <Sep /><Tools names={['indent', 'outdent']} />
            <Sep /><Tools names={['fontColor', 'fill', 'brush', 'script']} />
          </ToolBar>

          <ToolBar ruled>
            <Sep /><Tools names={['close']} />
            <Sep /><Grip />
            <Combo label="Catégorie" value={'12\u00a0\u00a0\u00a0Tableaux d'} w={106} />
            <Grip />
            <Combo label="Main d'oeuvre" value={'E7\u00a0\u00a0\u00a0Câbleur'} w={106} />
            <Grip />
            <Combo label="Remise" value="0 %" w={41} pad={3} grey />
            <Grip />
            <Combo label="Sous-traitance" value="Sous traitan" w={90} grey />
            <Grip />
            <Combo label="TVA" value="20.00%" large w={75} marked>
              <DropList role="listbox" aria-label="Taux de TVA">
                <Options>
                  {rates.map((rate, i) => (
                    <Option key={i} role="option" inset={i > 1 && i < 7} selected={i === 7} aria-selected={i === 7}>{rate}</Option>
                  ))}
                </Options>
                <Scroll>
                  <Arrow color="#b8b8b8" /><Arrow turn={180} color="#b8b8b8" />
                </Scroll>
              </DropList>
            </Combo>
            <Grip />
            <Combo label="Fabricant" value="3M" icon tint="1" w={106} />
            <Sep /><Grip />
            <Combo label="Famille" value="Courants f" icon w={98} />
            <Sep /><Tools names={['puzzle', 'lock']} active={['lock']} />
            <Sep /><Tools names={['spell']} />
            <ToolButton aria-label="Hors ligne"><Logo color="#9a9a9a" /></ToolButton>
            <Sep /><ToolButton aria-label="Synchroniser"><Logo color="#279a3c" /></ToolButton>
          </ToolBar>

          <Workspace>
            <GridSide>
              <GridRow>
                <GridClip>
                  <Grid>
                    <colgroup>{columns.map((col, i) => <col key={i} width={col.w} />)}</colgroup>
                    <thead>
                      <tr>
                        {columns.map((col, i) => (
                          <Th key={i} plain={col.plain} red={col.red}>{col.icon ? <Icon name={col.icon} size={14} /> : col.name}</Th>
                        ))}
                      </tr>
                    </thead>
                    <tbody>
                      <Tr h={19}>
                        <RowHead>1</RowHead>
                        {columns.slice(1).map((col, i) => <Td key={i} line={0}>{col.name === 'cd' && <Icon name="lineText" size={15} />}</Td>)}
                      </Tr>
                      {lots.map(lot => <LotRow key={lot.code} lot={lot} />)}
                      <Tr h={41} dark>
                        <RowHead>18</RowHead>
                        {columns.slice(1).map((col, i) => {
                          if (col.name === 'cd') return <Td key={i} line={1}><Icon name="total" size={15} /></Td>
                          if (col.name === '') return <Td key={i} line={1} bold top pad={4}>Total</Td>
                          if (col.name === 'Uté') return <Td key={i} line={1} bold top>Euro</Td>
                          if (col.name === 'PR Total\nfourniture') return <Td key={i} line={1} bold top align="right" shade="#d3d3d3">381,86 €</Td>
                          return <Td key={i} line={1} />
                        })}
                      </Tr>
                      <tr>
                        <Stripes />
                        {columns.slice(1).map((col, i) => <Td key={i} line={0} />)}
                      </tr>
                    </tbody>
                  </Grid>
                </GridClip>
                <ScrollBar parts={[0, 648, 8]} />
              </GridRow>
              <ScrollBar row parts={[531, 53, 800]} />
            </GridSide>

            <Panel>
              <PanelList>
                <PanelTitle>
                  <Svg size={10}><path d="M1 2l6 6-6 6M8 2l6 6-6 6" stroke="#fff" strokeWidth="2" /></Svg>
                  Métré du devis
                </PanelTitle>
                {groups.map(group => (
                  <React.Fragment key={group.name}>
                    <Group open={group.open}><Minus />{group.name}</Group>
                    {group.items.map(([ name, icon ]) => (
                      <Action key={name} enabled={icon}>{icon && <Icon name={icon} />}{name}</Action>
                    ))}
                  </React.Fragment>
                ))}
              </PanelList>
              <ScrollBar parts={[0, 401, 261]} />
            </Panel>
          </Workspace>

          <Tabs role="tablist">
            {tabs.map((item, i) => (
              <Tab key={item.name} role="tab" aria-selected={tab === i} active={tab === i ? 1 : undefined} w={item.w} stripe={item.stripe} onClick={() => setTab(i)}>
                <TabIcon active={tab === i ? 1 : undefined}><Svg size={18}>{item.icon}</Svg></TabIcon>
                {item.name}
                {!item.last && <TabCaret active={tab === i ? 1 : undefined} />}
              </Tab>
            ))}
          </Tabs>

          <StatusBar>
            <StatusCell w={343}>C:\Users\ar..\22az03t9a60u0n00_00000063.Q11</StatusCell>
            <StatusCell w={173}>2/18</StatusCell>
            <StatusCell w={173}>Sélection : 0</StatusCell>
          </StatusBar>
        </Window>
        <Behind><BehindBar /><BehindMark /></Behind>
      </DesktopRow>
      <Taskbar />
    </Desktop>
  )
}

export default App
